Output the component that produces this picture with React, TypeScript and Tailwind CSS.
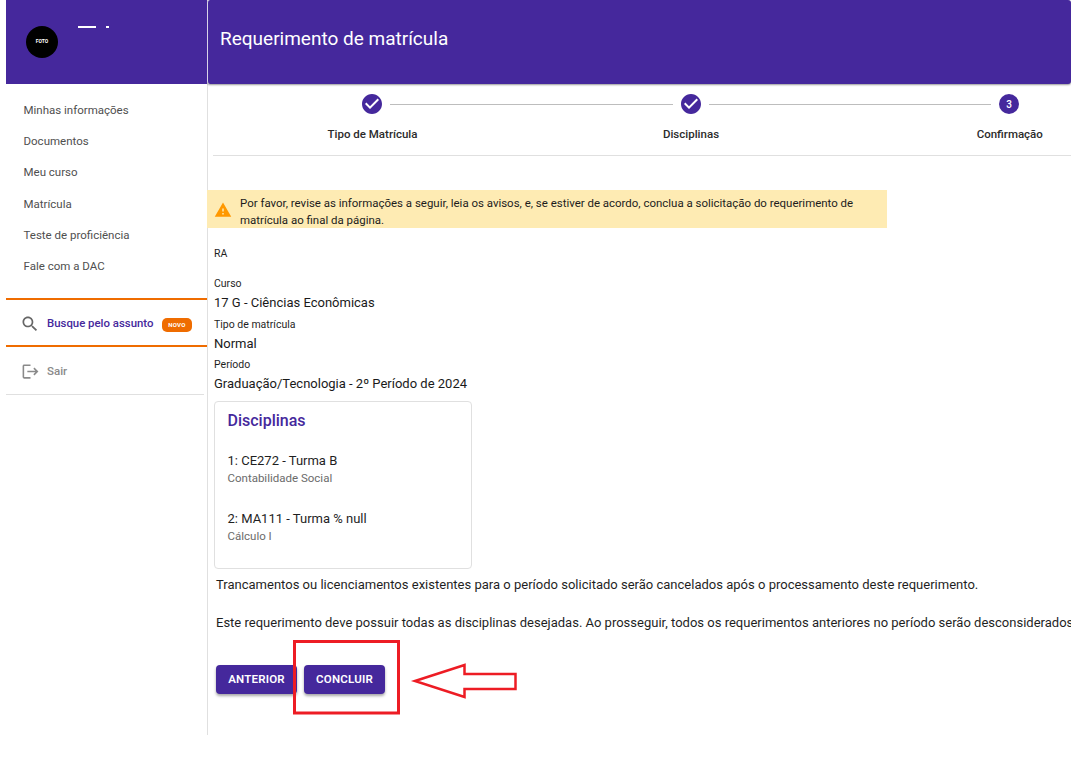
import React from "react";

const menu = ["Minhas informações", "Documentos", "Meu curso", "Matrícula", "Teste de proficiência", "Fale com a DAC"];

const StepDone = () => {
  return (
    <svg viewBox="2 2 20 20" className="w-5 h-5 shrink-0 fill-[#45289c]">
      <path d="M12 2C6.48 2 2 6.48 2 12s4.48 10 10 10 10-4.48 10-10S17.52 2 12 2zm-2 15l-5-5 1.41-1.41L10 14.17l7.59-7.59L19 8l-9 9z" />
    </svg>
  );
};

const Sidebar = () => {
  return (
    <aside className="w-[208px] shrink-0 pl-[6px] border-r border-[#e0e0e0]">
      <div className="h-[84px] bg-[#45289c] flex items-start pl-5 pt-[26px] relative">
        <div className="w-8 h-8 rounded-full bg-black flex items-center justify-center">
          <span className="text-white text-[5px] font-bold">FOTO</span>
        </div>
        <div className="absolute left-[72px] top-[26px] h-[2px] w-[18px] bg-white" />
        <div className="absolute left-[100px] top-[26px] h-[2px] w-[3px] bg-white" />
      </div>
      <nav className="pt-[10.7px] pb-[15.8px]">
        {menu.map((m) => (
          <div key={m} className="h-[31.3px] flex items-center pl-[17.5px] text-[11.5px] text-[#4f4f4f]">
            {m}
          </div>
        ))}
      </nav>
      <div className="h-[49px] border-y-2 border-[#ef6c00] flex items-center pl-[14px] pt-[2px]">
        <svg viewBox="0 0 24 24" className="w-5 h-5 fill-[#666666] shrink-0">
          <path d="M15.5 14h-.79l-.28-.27C15.41 12.59 16 11.11 16 9.5 16 5.91 13.09 3 9.5 3S3 5.91 3 9.5 5.91 16 9.5 16c1.61 0 3.09-.59 4.23-1.57l.27.28v.79l5 4.99L20.49 19l-4.99-5zm-6 0C7.01 14 5 11.99 5 9.5S7.01 5 9.5 5 14 7.01 14 9.5 11.99 14 9.5 14z" />
        </svg>
        <span className="ml-[7px] text-[11.4px] font-medium text-[#45289c]">Busque pelo assunto</span>
        <span className="ml-[8.5px] mt-[2px] h-[14px] w-[30px] rounded-[5px] bg-[#ef6c00] text-white text-[6px] font-bold flex items-center justify-center tracking-[0.3px]">
          NOVO
        </span>
      </div>
      <div className="h-[48px] border-b border-[#e0e0e0] flex items-center pl-[15px] pt-[1px] mr-[3px]">
        <svg viewBox="0 0 24 24" className="w-[19px] h-[19px] fill-[#8a8a8a] shrink-0">
          <path d="M17 7l-1.41 1.41L18.17 11H8v2h10.17l-2.58 2.58L17 17l5-5zM4 5h8V3H4c-1.1 0-2 .9-2 2v14c0 1.1.9 2 2 2h8v-2H4V5z" />
        </svg>
        <span className="ml-[7px] text-[11.5px] font-medium text-[#8a8a8a]">Sair</span>
      </div>
    </aside>
  );
};

const Stepper = () => {
  return (
    <div className="h-[72px] ml-[6px] border-b border-[#e0e0e0]">
      <div className="flex items-center pt-[10px] pl-[149px] w-[1000px]">
        <StepDone />
        <div className="w-[283px] mx-2 h-px bg-[#bdbdbd] shrink-0" />
        <StepDone />
        <div className="w-[282px] mx-2 h-px bg-[#bdbdbd] shrink-0" />
        <div className="w-5 h-5 rounded-full bg-[#45289c] flex items-center justify-center text-white text-[10px] font-medium shrink-0">
          3
        </div>
      </div>
      <div className="flex mt-[12px] pl-[0.5px] w-[1000px] text-[11.5px] font-medium text-[#2b2b2b] leading-[16px]">
        <div className="w-[318px] shrink-0 text-center">Tipo de Matrícula</div>
        <div className="w-[319px] shrink-0 text-center">Disciplinas</div>
        <div className="w-[318.5px] shrink-0 text-center">Confirmação</div>
      </div>
    </div>
  );
};

const Field = ({ label, value }: { label: string; value: string }) => {
  return (
    <div>
      <div className="text-[10.5px] leading-[18px] text-[#1f1f1f]">{label}</div>
      <div className="text-[13px] leading-[20px] text-[#1a1a1a]">{value}</div>
    </div>
  );
};

const App = () => {
  return (
    <div className="w-[1071px] h-[758px] overflow-hidden bg-white" style={{ fontFamily: "Roboto, sans-serif" }}>
      <div className="flex h-[735px] relative">
        <Sidebar />
        <main className="flex-1 min-w-0 overflow-hidden -ml-px">
          <header className="h-[84px] bg-[#45289c] rounded-[3px] flex items-center pl-[12px] pb-[6px] shadow-[0_1px_2px_rgba(0,0,0,0.4)] border-l border-[#d8d4e8]">
            <h1 className="text-white text-[19px] font-normal">Requerimento de matrícula</h1>
          </header>
          <Stepper />
          <div className="mt-[34px] w-[680px] h-[38px] bg-[#feebb3] flex items-start pl-[7px] pt-[5px] text-[11.46px] leading-[17px] text-[#1c1c1c]">
            <svg viewBox="0 0 24 24" className="w-[18px] h-[18px] mt-[6px] fill-[#ff9800] shrink-0">
              <path d="M1 21h22L12 2 1 21zm12-3h-2v-2h2v2zm0-4h-2v-4h2v4z" />
            </svg>
            <p className="ml-[8px] w-[630px]">
              Por favor, revise as informações a seguir, leia os avisos, e, se estiver de acordo, conclua a solicitação do requerimento de matrícula ao final da página.
            </p>
          </div>
          <div className="pl-[7px]">
            <div className="mt-[18px] h-[29px] text-[10.5px] leading-[16px] text-[#1f1f1f]">RA</div>
            <div className="flex flex-col gap-[2.5px]">
              <Field label="Curso" value="17 G - Ciências Econômicas" />
              <Field label="Tipo de matrícula" value="Normal" />
              <Field label="Período" value="Graduação/Tecnologia - 2º Período de 2024" />
            </div>
            <section className="mt-[7px] w-[258px] h-[168px] border border-[#e0e0e0] rounded-[4px] px-[12.5px] pt-[9px]">
              <h2 className="text-[16px] leading-[20px] font-medium text-[#45289c]">Disciplinas</h2>
              <div className="mt-[20px] text-[13px] leading-[20px] text-[#1f1f1f]">1: CE272 - Turma B</div>
              <div className="text-[11.5px] leading-[15px] text-[#6b6b6b]">Contabilidade Social</div>
              <div className="mt-[23px] text-[13px] leading-[20px] text-[#1f1f1f]">2: MA111 - Turma % null</div>
              <div className="text-[11.5px] leading-[15px] text-[#6b6b6b]">Cálculo I</div>
            </section>
            <div className="pl-[2px] whitespace-nowrap text-[13.03px] leading-[18px] text-[#1f1f1f]">
              <p className="mt-[7px]">
                Trancamentos ou licenciamentos existentes para o período solicitado serão cancelados após o processamento deste requerimento.
              </p>
              <p className="mt-[20px]">
                Este requerimento deve possuir todas as disciplinas desejadas. Ao prosseguir, todos os requerimentos anteriores no período serão desconsiderados.
              </p>
            </div>
            <div className="flex gap-[7px] mt-[33px] pl-[2px]">
              <button className="w-[81px] h-[29px] rounded-[4px] bg-[#45289c] text-white text-[11.5px] font-semibold tracking-[0.2px] shadow-[0_2px_3px_rgba(0,0,0,0.35)]">
                ANTERIOR
              </button>
              <button className="w-[81px] h-[29px] rounded-[4px] bg-[#45289c] text-white text-[11.5px] font-semibold tracking-[0.2px] shadow-[0_2px_3px_rgba(0,0,0,0.35)]">
                CONCLUIR
              </button>
            </div>
          </div>
        </main>
        {/* anotacao vermelha por cima da tela */}
        <svg className="absolute left-0 top-0 pointer-events-none" width="1071" height="758" fill="none" stroke="#ed1c24">
          <rect x="294.5" y="641.5" width="104" height="71.5" strokeWidth="3" />
          <path d="M415 681 L464.5 665 V674 H515.5 V689 H464.5 V697 Z" strokeWidth="2.5" />
        </svg>
      </div>
    </div>
  );
};

export default App;
